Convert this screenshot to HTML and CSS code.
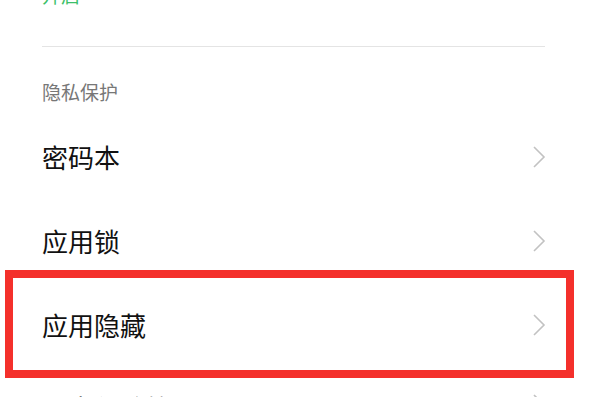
FILE: index.html
```html
<!DOCTYPE html>
<html lang="zh-CN">
<head>
<meta charset="utf-8">
<title>隐私保护</title>
<link rel="stylesheet" href="styles.css">
</head>
<body>
<div class="page">
  <div class="top-link">开启</div>
  <div class="divider"></div>
  <div class="section-title">隐私保护</div>
  <div class="row"><span class="label">密码本</span><svg class="chev" viewBox="0 0 14 24" width="14" height="24"><polyline points="2,2 12,12 2,22"/></svg></div>
  <div class="row"><span class="label">应用锁</span><svg class="chev" viewBox="0 0 14 24" width="14" height="24"><polyline points="2,2 12,12 2,22"/></svg></div>
  <div class="row"><span class="label">应用隐藏</span><svg class="chev" viewBox="0 0 14 24" width="14" height="24"><polyline points="2,2 12,12 2,22"/></svg></div>
  <div class="row row-sub"><span class="label">私密保险箱</span><svg class="chev" viewBox="0 0 14 24" width="14" height="24"><polyline points="2,2 12,12 2,22"/></svg></div>
</div>
<div class="highlight"></div>
</body>
</html>
```
FILE: styles.css
```css
html, body {
  margin: 0;
  padding: 0;
  background: #ffffff;
  overflow: hidden;
  height: 397px;
}
body {
  position: relative;
  font-family: "Noto Sans CJK SC", "Noto Sans", sans-serif;
}
.page {
  padding: 0 49px 0 42px;
}
.top-link {
  margin-top: -15px;
  height: 20px;
  line-height: 20px;
  font-size: 19px;
  color: #3cbf6a;
}
.divider {
  margin-top: 41px;
  height: 1px;
  background: #e4e4e4;
}
.section-title {
  height: 68px;
  box-sizing: border-box;
  padding-top: 35px;
  line-height: 20px;
  font-size: 19px;
  color: #777777;
}
.row {
  height: 84px;
  display: flex;
  align-items: center;
  justify-content: space-between;
}
.row-sub {
  align-items: flex-start;
  padding-top: 26px;
  box-sizing: border-box;
}
.label {
  font-size: 26px;
  color: #111111;
  line-height: 30px;
}
.chev {
  margin-right: -1px;
  fill: none;
  stroke: #c2c2c2;
  stroke-width: 1.6;
}
.highlight {
  position: absolute;
  left: 5px;
  top: 270px;
  width: 569px;
  height: 108px;
  box-sizing: border-box;
  border: 8px solid #f4302b;
}
```
